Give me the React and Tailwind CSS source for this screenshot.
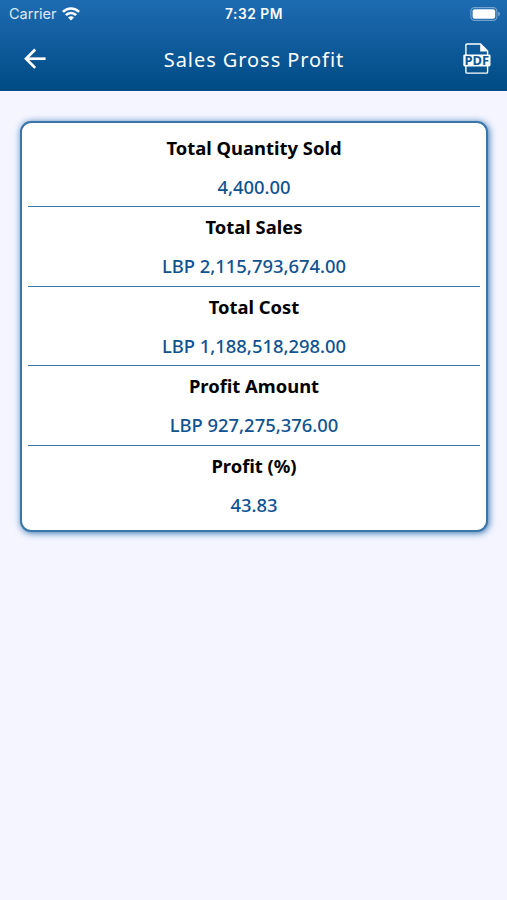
const rows = [
  { label: 'Total Quantity Sold', value: '4,400.00' },
  { label: 'Total Sales', value: 'LBP 2,115,793,674.00' },
  { label: 'Total Cost', value: 'LBP 1,188,518,298.00' },
  { label: 'Profit Amount', value: 'LBP 927,275,376.00' },
  { label: 'Profit (%)', value: '43.83' },
];

function WifiIcon() {
  return (
    <svg width="18" height="14" viewBox="0 0 18 14" fill="none" stroke="white" strokeWidth="2.6">
      <path d="M0.9 4.9C5.4 0.3 12.6 0.3 17.1 4.9" />
      <path d="M3.9 8.1C6.7 5.2 11.3 5.2 14.1 8.1" />
      <path d="M9 13.4L6 10.4C7.7 8.8 10.3 8.8 12 10.4Z" fill="white" stroke="none" />
    </svg>
  );
}

function BatteryIcon() {
  return (
    <svg width="31" height="14" viewBox="0 0 31 14" fill="none">
      <rect x="0.9" y="0.6" width="26" height="12.8" rx="3.6" stroke="white" strokeOpacity="0.4" strokeWidth="1.1" />
      <rect x="2.6" y="2.3" width="22.6" height="9.4" rx="2" fill="white" />
      <path d="M28.3 4.8C30.4 5.6 30.4 8.4 28.3 9.2Z" fill="white" fillOpacity="0.5" />
    </svg>
  );
}

function BackIcon() {
  return (
    <svg width="24" height="22" viewBox="0 0 24 22" fill="none" stroke="white" strokeWidth="2.7">
      <path d="M22.6 10.7H3" />
      <path d="M12.2 1.5L3 10.7L12.2 19.9" />
    </svg>
  );
}

function PdfIcon() {
  return (
    <svg width="28" height="32" viewBox="0 0 28 32" fill="none">
      <path d="M2.9 12V2.2Q2.9 1 4.1 1H17.5L24.6 8.1V12M2.9 22V28.9Q2.9 30.1 4.1 30.1H23.4Q24.6 30.1 24.6 28.9V22" stroke="white" strokeWidth="1.4" />
      <path d="M17.2 0.8L24.8 8.4H17.2Z" fill="white" />
      <rect x="0.3" y="11.4" width="27.2" height="12.1" rx="1.4" fill="white" />
      <text
        x="13.9"
        y="21.5"
        textAnchor="middle"
        textLength="24.6"
        lengthAdjust="spacingAndGlyphs"
        className="fill-[#0b5796] font-['Noto_Sans',sans-serif] text-[11.5px] font-bold"
      >
        PDF
      </text>
    </svg>
  );
}

function Header() {
  return (
    <header className="h-[91px] bg-linear-to-b from-[#1d6bb2] to-[#004b84] text-white">
      <div className="grid h-[27px] grid-cols-3 items-center pr-[6px] pl-[9px] font-[Inter,sans-serif]">
        <div className="flex items-center gap-[5px]">
          <span className="text-[14.5px] text-white/85">Carrier</span>
          <WifiIcon />
        </div>
        <span className="pt-px pr-[2px] text-center text-[13.8px] font-semibold tracking-[0.5px]">7:32 PM</span>
        <div className="flex justify-end">
          <BatteryIcon />
        </div>
      </div>
      <div className="flex h-[63px] items-center justify-between pr-4 pl-[23px]">
        <button>
          <BackIcon />
        </button>
        <h1 className="pt-[2px] pr-[2px] text-[20px] tracking-[0.93px]">Sales Gross Profit</h1>
        <button>
          <PdfIcon />
        </button>
      </div>
    </header>
  );
}

export default function App() {
  return (
    <div className="min-h-screen bg-[#f4f5ff] font-['Noto_Sans',sans-serif]">
      <Header />
      <main className="pt-[30px] pr-[19px] pl-5">
        <section className="h-[410.5px] rounded-[11px] border-2 border-[#3b76a8] bg-white px-[6px] pt-[5px] shadow-[1px_1px_7px_#2f6fab]">
          {rows.map((row) => (
            <div
              key={row.label}
              className="flex h-[79.4px] flex-col items-center border-b-[1.5px] border-[#3b76a8] text-[18.4px] last:border-b-0"
            >
              <span className="mt-[6px] leading-[27px] font-bold text-black">{row.label}</span>
              <span className="mt-3 leading-[27px] font-medium text-[#0f5290]">{row.value}</span>
            </div>
          ))}
        </section>
      </main>
    </div>
  );
}
